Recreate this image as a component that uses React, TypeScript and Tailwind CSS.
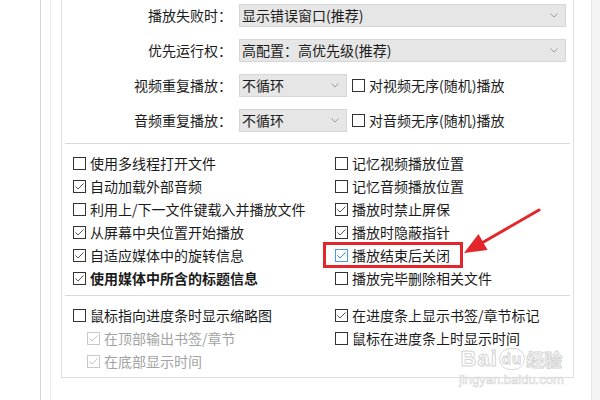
import React from "react";

type BoxProps = {
  label: string;
  checked?: boolean;
  disabled?: boolean;
  hover?: boolean;
  bold?: boolean;
};

const CheckRow = ({ label, checked, disabled, hover, bold }: BoxProps) => {
  const border = disabled
    ? "border-[#c9c9c9]"
    : hover
    ? "border-[#4a98e8]"
    : "border-[#333333]";
  const tick = disabled ? "#c4c4c4" : hover ? "#2f86e0" : "#555555";
  return (
    <div className="flex h-[23px] items-center">
      <div className={`h-[13px] w-[13px] shrink-0 border bg-white ${border}`}>
        {checked && (
          <svg width="11" height="11" viewBox="0 0 11 11">
            <polyline
              points="1.5,5.5 4,8 9.5,2.5"
              fill="none"
              stroke={tick}
              strokeWidth="1"
            />
          </svg>
        )}
      </div>
      <span
        className={`ml-[4px] whitespace-nowrap text-[14px] leading-[23px] ${
          disabled ? "text-[#a3a3a3]" : "text-[#1b1b1b]"
        } ${bold ? "font-bold" : ""}`}
      >
        {label}
      </span>
    </div>
  );
};

const Chevron = () => (
  <svg width="8" height="5" viewBox="0 0 8 5">
    <polyline
      points="0.5,0.5 4,4 7.5,0.5"
      fill="none"
      stroke="#9a9a9a"
      strokeWidth="1"
    />
  </svg>
);

const Select = ({ value, small }: { value: string; small?: boolean }) => (
  <div
    className={`flex h-[23px] items-center justify-between border border-[#d6d6d6] bg-[#e6e6e6] pl-[2px] pr-[7px] ${
      small ? "w-[108px]" : "w-[327px]"
    }`}
  >
    <span className="whitespace-nowrap text-[14px] text-[#1b1b1b]">{value}</span>
    <Chevron />
  </div>
);

const Label = ({ text }: { text: string }) => (
  <div className="w-[170px] shrink-0 text-right text-[14px] text-[#1b1b1b]">
    {text}
  </div>
);

export default function App() {
  return (
    <div className="relative flex h-[400px] w-[600px] overflow-hidden bg-white font-['Microsoft_YaHei','Noto_Sans_CJK_SC',sans-serif]">
      <div className="w-[40px] shrink-0" />
      <div className="w-px shrink-0 bg-[#d6d6d6]" />
      <div className="w-[9px] shrink-0" />
      <div className="w-px shrink-0 bg-[#ededed]" />
      <div className="w-[10px] shrink-0" />

      <div className="flex h-[378px] w-[513px] shrink-0 flex-col border-x border-b border-[#dedede]">
        {/* dropdown settings */}
        <div className="flex flex-col gap-[12px] pt-[4px] pb-[11px]">
          <div className="flex items-center">
            <Label text="播放失败时：" />
            <div className="ml-[7px]">
              <Select value="显示错误窗口(推荐)" />
            </div>
          </div>
          <div className="flex items-center">
            <Label text="优先运行权：" />
            <div className="ml-[7px]">
              <Select value="高配置：高优先级(推荐)" />
            </div>
          </div>
          <div className="flex items-center">
            <Label text="视频重复播放：" />
            <div className="ml-[7px]">
              <Select value="不循环" small />
            </div>
            <div className="ml-[5px]">
              <CheckRow label="对视频无序(随机)播放" />
            </div>
          </div>
          <div className="flex items-center">
            <Label text="音频重复播放：" />
            <div className="ml-[7px]">
              <Select value="不循环" small />
            </div>
            <div className="ml-[5px]">
              <CheckRow label="对音频无序(随机)播放" />
            </div>
          </div>
        </div>

        <div className="mx-[3px] h-px bg-[#d9d9d9]" />

        {/* playback options */}
        <div className="flex pt-[8px] pb-[5px] pl-[11px]">
          <div className="w-[262px] shrink-0">
            <CheckRow label="使用多线程打开文件" />
            <CheckRow label="自动加载外部音频" checked />
            <CheckRow label="利用上/下一文件键载入并播放文件" />
            <CheckRow label="从屏幕中央位置开始播放" checked />
            <CheckRow label="自适应媒体中的旋转信息" checked />
            <CheckRow label="使用媒体中所含的标题信息" checked bold />
          </div>
          <div>
            <CheckRow label="记忆视频播放位置" />
            <CheckRow label="记忆音频播放位置" />
            <CheckRow label="播放时禁止屏保" checked />
            <CheckRow label="播放时隐蔽指针" checked />
            <CheckRow label="播放结束后关闭" checked hover />
            <CheckRow label="播放完毕删除相关文件" />
          </div>
        </div>

        <div className="mx-[3px] h-px bg-[#d9d9d9]" />

        {/* progress bar options */}
        <div className="flex pt-[8px] pl-[11px]">
          <div className="w-[262px] shrink-0">
            <CheckRow label="鼠标指向进度条时显示缩略图" />
            <div className="pl-[14px]">
              <CheckRow label="在顶部输出书签/章节" checked disabled />
              <CheckRow label="在底部显示时间" checked disabled />
            </div>
          </div>
          <div>
            <CheckRow label="在进度条上显示书签/章节标记" checked />
            <CheckRow label="鼠标在进度条上时显示时间" />
          </div>
        </div>
      </div>

      <div className="w-[17px] shrink-0" />
      <div className="w-px shrink-0 bg-[#e6e6e6]" />
      <div className="flex-1 bg-[#f4f4f4]" />

      {/* annotation */}
      <div className="absolute left-[323px] top-[242px] h-[26px] w-[140px] border-[3px] border-[#e3262c]" />
      <svg
        className="absolute left-0 top-0"
        width="600"
        height="400"
        viewBox="0 0 600 400"
      >
        <line x1="539" y1="210" x2="480" y2="244" stroke="#e3262c" strokeWidth="3" strokeLinecap="round" />
        <polygon points="464,253 478.5,234 487.5,250" fill="#e3262c" />
      </svg>

      {/* watermark */}
      <div className="pointer-events-none absolute left-[459px] top-[347px] flex flex-col items-center">
        <div className="flex h-[24px] items-center font-['Liberation_Sans',sans-serif] text-[22px] font-bold leading-[24px] tracking-[1px] text-white [-webkit-text-stroke:1px_#d4d4d4]">
          <span>Bai</span>
          <span className="mx-[1px] rounded-full border border-[#d8d8d8] px-[2px] text-[15px] leading-[20px]">
            du
          </span>
          <span className="font-['Noto_Sans_CJK_SC',sans-serif] text-[18px] tracking-[0px]">经验</span>
        </div>
        <div className="mt-[2px] font-['Liberation_Sans',sans-serif] text-[13px] leading-[14px] text-white [-webkit-text-stroke:0.6px_#d4d4d4]">
          jingyan.baidu.com
        </div>
      </div>
    </div>
  );
}
